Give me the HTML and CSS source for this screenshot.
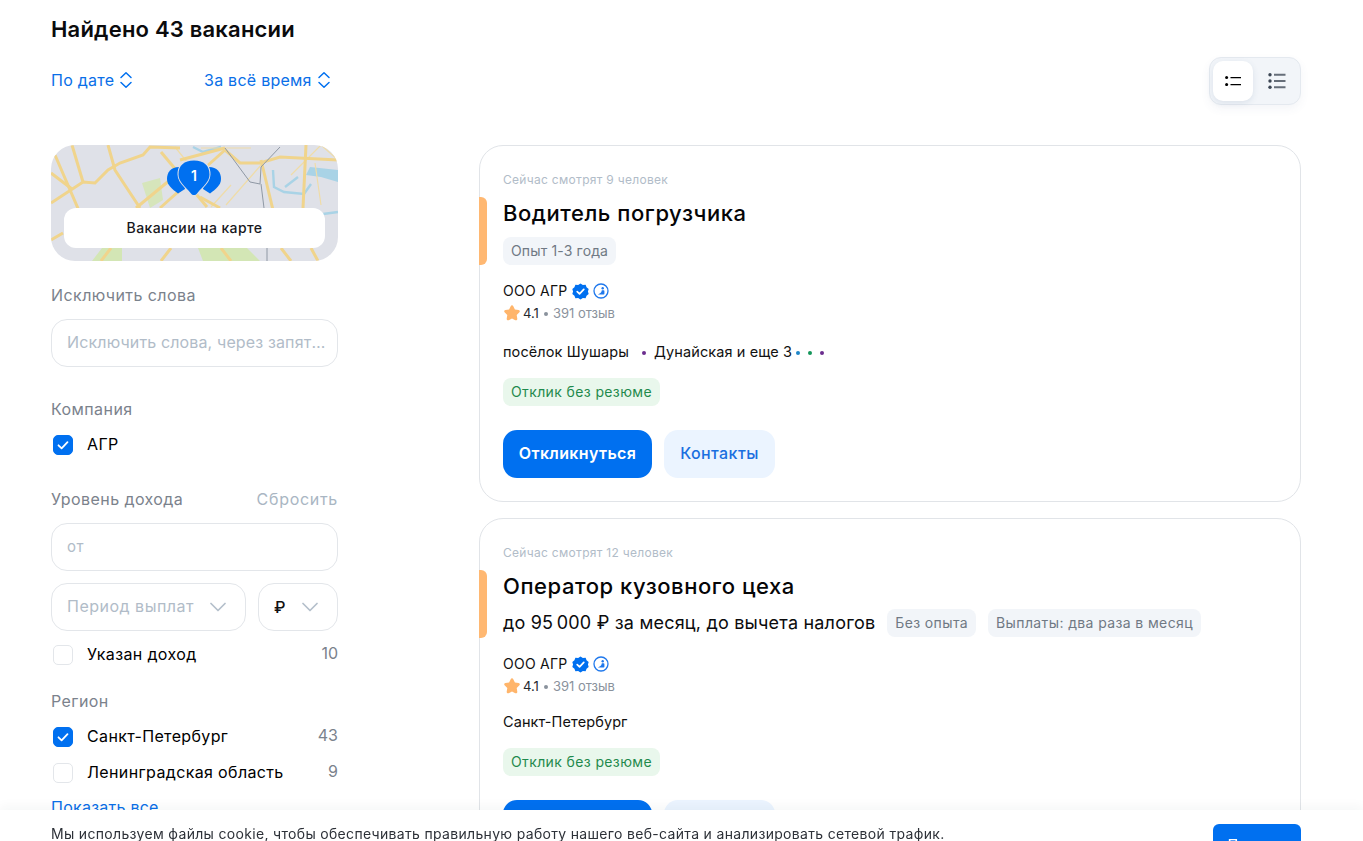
FILE: index.html
```html
<!DOCTYPE html>
<html lang="ru">
<head>
<meta charset="utf-8">
<title>Найдено 43 вакансии</title>
<link rel="stylesheet" href="styles.css">
</head>
<body>
<svg class="defs" width="0" height="0" aria-hidden="true">
  <defs>
    <symbol id="updown" viewBox="0 0 14 18"><path d="M2 6.5 7 1.8l5 4.7M2 11.5l5 4.7 5-4.7" fill="none" stroke="#0070f0" stroke-width="1.5" stroke-linecap="round" stroke-linejoin="round"/></symbol>
    <symbol id="chev" viewBox="0 0 16 10"><path d="M1 1.5 8 8.5l7-7" fill="none" stroke="#b4bfcb" stroke-width="1.7" stroke-linecap="round" stroke-linejoin="round"/></symbol>
    <symbol id="tick" viewBox="0 0 20 20"><path d="m5.5 10.3 3.1 3 5.9-6.2" fill="none" stroke="#fff" stroke-width="1.8" stroke-linecap="round" stroke-linejoin="round"/></symbol>
    <symbol id="verified" viewBox="0 0 16 16"><path d="M8 .4l2.2 1.4 2.6-.1.9 2.4 2 1.6-.7 2.3.7 2.3-2 1.6-.9 2.4-2.6-.1L8 15.6l-2.2-1.4-2.6.1-.9-2.4-2-1.6.7-2.3-.7-2.3 2-1.6.9-2.4 2.6.1z" fill="#0070f0"/><path d="m4.9 8.1 2.2 2.1 4-4.2" fill="none" stroke="#fff" stroke-width="1.6" stroke-linecap="round" stroke-linejoin="round"/></symbol>
    <symbol id="clockbadge" viewBox="0 0 16 16"><circle cx="8" cy="8" r="7" fill="none" stroke="#1f78ec" stroke-width="1.3"/><path d="M3.8 11.5c1.5-.2 2.6-.7 3.6-1.6.8-.7 1.1-.9 1.4-2.6h1.8c.5 0 .8.3.8.8v2.6c0 .5-.3.8-.8.8z" fill="#1f78ec"/><circle cx="9.7" cy="5.2" r="1.2" fill="#1f78ec"/></symbol>
    <symbol id="star" viewBox="0 0 18 18"><path d="M9 1.2c.6 0 1 .4 1.3 1l1.6 3.3 3.7.5c1.2.2 1.6 1.5.8 2.3L13.7 11l.6 3.7c.2 1.2-1 2-2 1.5L9 14.4l-3.3 1.8c-1 .5-2.2-.3-2-1.5l.6-3.7-2.7-2.7c-.8-.8-.4-2.1.8-2.3l3.7-.5 1.6-3.3c.3-.6.7-1 1.3-1z" fill="#ffb56b"/></symbol>
  </defs>
</svg>

<main class="page">
  <h1 class="page-title">Найдено 43 вакансии</h1>

  <div class="toolbar">
    <div class="sorts">
      <a class="sort sort-date">По дате <svg class="updown"><use href="#updown"/></svg></a>
      <a class="sort">За всё время <svg class="updown"><use href="#updown"/></svg></a>
    </div>
    <div class="view-switch">
      <span class="view-btn view-btn-active">
        <svg width="16" height="10" viewBox="0 0 16 10"><circle cx="1.6" cy="1.6" r="1.5" fill="#000"/><circle cx="1.6" cy="8.6" r="1.5" fill="#000"/><path d="M5.5 1.6H16M5.5 8.6H16" stroke="#000" stroke-width="1.3"/></svg>
      </span>
      <span class="view-btn">
        <svg width="18" height="16" viewBox="0 0 18 16"><circle cx="2" cy="1.8" r="1.7" fill="#3c4654"/><circle cx="2" cy="8" r="1.7" fill="#3c4654"/><circle cx="2" cy="14.2" r="1.7" fill="#3c4654"/><path d="M6 1.8h11.5M6 8h11.5M6 14.2h11.5" stroke="#666e79" stroke-width="2"/></svg>
      </span>
    </div>
  </div>

  <div class="columns">
    <aside class="filters">
      <div class="map-card">
        <svg class="map-art" viewBox="0 0 287 116" preserveAspectRatio="none" aria-hidden="true">
          <rect width="287" height="116" fill="#dfe1e8"/>
          <path d="M91 38 109 33 112 55 99 63z" fill="#d6e5bb"/>
          <path d="M41 116 51 103H71V116zM147 103H196L209 116H152z" fill="#d3e6b5"/>
          <path d="M222 25l1 17 10 5 20 2 7-10M234 42 247 32M142 2l10 5 18-5M272 69l15-2" fill="none" stroke="#a9d3e6" stroke-width="2.4"/>
          <path d="M259 22 287 25V37L270 32 255 30z" fill="#a9d3e6"/>
          <g fill="none" stroke="#efdca8" stroke-width="1.2">
            <path d="M175 60 210 20M240 30 270 0 287 15M150 3H200M124 2 149 33M160 62 180 40M0 6 10 0M264 18 270 60"/>
          </g>
          <g fill="none" stroke="#f0d48c" stroke-width="3">
            <path d="M4 10 29 68 36 80"/>
            <path d="M21 0 32 37"/>
            <path d="M0 58 32 37 44 38 57 25 69 18 92 10 99 2 129 3"/>
            <path d="M57 0 64 25 89 63"/>
            <path d="M129 15 174 3"/>
            <path d="M109 63 174 5"/>
            <path d="M85 63 125 30"/>
            <path d="M110 7 156 62"/>
            <path d="M149 52 169 63"/>
            <path d="M174 5 189 18 209 18 229 12 287 15"/>
            <path d="M210 15 222 65"/>
            <path d="M255 0 252 63"/>
            <path d="M0 95 12 88M260 103 267 116M60 103 50 116M120 103 110 116M170 103 180 116M230 103 240 116M0 28 21 44"/>
          </g>
          <path d="M174 3 199 37 209 39 210 22 229 2M210 39 213 63M216 103V116" fill="none" stroke="#8f98a4" stroke-width="1"/>
        </svg>
        <div class="map-pins" aria-hidden="true">
          <svg width="56" height="38" viewBox="0 0 56 38">
            <path d="M13 7C5 7 1 12 1 19 1 25 6 29 12 33.5L19 29 15 7z" fill="#0070f0"/>
            <path d="M43 7C51 7 55 12 55 19 55 25 50 29 44 33.5L37 29 41 7z" fill="#0070f0"/>
            <path d="M28 .5C38 .5 43.5 5.5 43.5 14.5 43.5 22 37 26 31 33.5 29.5 35.5 26.5 35.5 25 33.5 19 26 12.5 22 12.5 14.5 12.5 5.5 18 .5 28 .5z" fill="#0070f0" stroke="#dfe1e8" stroke-width="2" paint-order="stroke"/>
          </svg>
          <span class="map-pin-num">1</span>
        </div>
        <button class="map-btn">Вакансии на карте</button>
      </div>

      <section class="filter-group">
        <h3 class="filter-label">Исключить слова</h3>
        <div class="field field-words"><span class="placeholder ellipsis">Исключить слова, через запятую</span></div>
      </section>

      <section class="filter-group group-company">
        <h3 class="filter-label">Компания</h3>
        <label class="check-row check-company"><span class="box box-on"><svg width="20" height="20"><use href="#tick"/></svg></span><span class="check-text">АГР</span></label>
      </section>

      <section class="filter-group group-income">
        <div class="label-row">
          <h3 class="filter-label">Уровень дохода</h3>
          <span class="reset">Сбросить</span>
        </div>
        <div class="field field-from"><span class="placeholder placeholder-sm">от</span></div>
        <div class="select-row">
          <div class="field select-period"><span class="placeholder">Период выплат</span><svg class="chev" width="16" height="10"><use href="#chev"/></svg></div>
          <div class="field select-cur"><span class="cur">₽</span><svg class="chev" width="16" height="10"><use href="#chev"/></svg></div>
        </div>
        <label class="check-row check-income"><span class="box"></span><span class="check-text">Указан доход</span><span class="count">10</span></label>
      </section>

      <section class="filter-group group-region">
        <h3 class="filter-label">Регион</h3>
        <label class="check-row check-spb"><span class="box box-on"><svg width="20" height="20"><use href="#tick"/></svg></span><span class="check-text">Санкт-Петербург</span><span class="count">43</span></label>
        <label class="check-row check-lo"><span class="box"></span><span class="check-text">Ленинградская область</span><span class="count">9</span></label>
        <a class="show-all">Показать все</a>
      </section>
    </aside>

    <section class="results">
      <article class="job">
        <span class="job-accent"></span>
        <p class="watching">Сейчас смотрят 9 человек</p>
        <h2 class="job-title">Водитель погрузчика</h2>
        <div class="job-meta"><span class="tag tag-exp">Опыт 1-3 года</span></div>
        <div class="company"><span>ООО АГР</span><svg width="17" height="17"><use href="#verified"/></svg><svg width="16" height="16"><use href="#clockbadge"/></svg></div>
        <div class="rating"><svg width="18" height="18"><use href="#star"/></svg><b>4.1</b><i class="sep"></i><span>391 отзыв</span></div>
        <div class="location">
          <span>посёлок Шушары</span>
          <i class="dot dot-first dot-purple"></i>
          <span>Дунайская и еще 3</span>
          <i class="dot dot-blue"></i><i class="dot dot-green"></i><i class="dot dot-purple"></i>
        </div>
        <span class="tag tag-green">Отклик без резюме</span>
        <div class="actions"><button class="btn btn-primary">Откликнуться</button><button class="btn btn-soft">Контакты</button></div>
      </article>

      <article class="job">
        <span class="job-accent"></span>
        <p class="watching">Сейчас смотрят 12 человек</p>
        <h2 class="job-title">Оператор кузовного цеха</h2>
        <div class="job-meta job-meta-salary"><span class="salary">до 95&thinsp;000 ₽ за месяц, до вычета налогов</span><span class="tag">Без опыта</span><span class="tag">Выплаты: два раза в месяц</span></div>
        <div class="company"><span>ООО АГР</span><svg width="17" height="17"><use href="#verified"/></svg><svg width="16" height="16"><use href="#clockbadge"/></svg></div>
        <div class="rating"><svg width="18" height="18"><use href="#star"/></svg><b>4.1</b><i class="sep"></i><span>391 отзыв</span></div>
        <div class="location location-plain"><span>Санкт-Петербург</span></div>
        <span class="tag tag-green">Отклик без резюме</span>
        <div class="actions"><button class="btn btn-primary">Откликнуться</button><button class="btn btn-soft">Контакты</button></div>
      </article>
    </section>
  </div>
</main>

<div class="cookie">
  <p class="cookie-text">Мы используем файлы cookie, чтобы обеспечивать правильную работу нашего веб-сайта и анализировать сетевой трафик.</p>
  <button class="cookie-btn">Принять</button>
</div>
</body>
</html>
```
FILE: styles.css
```css
* { box-sizing: border-box; }
html, body { margin: 0; height: 841px; overflow: hidden; background: #fff; }
body { font-family: Inter, "Noto Sans", "Liberation Sans", sans-serif; color: #000; font-size: 16px; }
h1, h2, h3, p { margin: 0; font-weight: 400; }
button { font-family: inherit; border: 0; cursor: pointer; }
.defs { position: absolute; }

.page { width: 1250px; margin-left: 51px; }
.page-title { font-size: 22px; line-height: 28px; font-weight: 600; padding-top: 15px; letter-spacing: 0.2px; color: #0b0b0d; }

.toolbar { display: flex; justify-content: space-between; align-items: flex-start; margin-top: 14px; height: 88px; }
.sorts { display: flex; padding-top: 13px; }
.sort { display: inline-flex; align-items: center; gap: 5px; font-size: 16px; line-height: 20px; color: #0a6fe8; letter-spacing: 0.25px; }
.sort-date { width: 153px; }
.updown { width: 14px; height: 18px; }

.view-switch { display: flex; width: 92px; height: 48px; padding: 3px; background: #f2f5f9; border: 1px solid #e4e9ef; border-radius: 12px; box-shadow: 0 4px 10px rgba(60, 90, 130, 0.06); }
.view-btn { width: 40px; height: 40px; flex: none; display: flex; align-items: center; justify-content: center; border-radius: 10px; }
.view-btn + .view-btn { margin-left: 4px; }
.view-btn-active { background: #fff; box-shadow: 0 2px 6px rgba(60, 90, 130, 0.12); }

.columns { display: flex; align-items: flex-start; }
.filters { width: 287px; flex: none; margin-right: 141px; }

.map-card { position: relative; height: 116px; border-radius: 24px; overflow: hidden; }
.map-art { display: block; width: 100%; height: 100%; }
.map-pins { position: absolute; left: 115px; top: 15px; width: 56px; height: 38px; }
.map-pin-num { position: absolute; left: 0; right: 0; top: 7px; text-align: center; color: #fff; font-size: 14px; line-height: 18px; font-weight: 600; }
.map-btn { position: absolute; left: 13px; right: 13px; bottom: 13px; height: 40px; padding: 0 0 2px; background: #fff; border-radius: 12px; font-size: 14px; font-weight: 500; color: #17171c; letter-spacing: 0.4px; }

.filter-label { font-size: 16px; line-height: 20px; color: #7b828c; letter-spacing: 0.42px; }
.filter-group { margin-top: 24px; }
.group-company { margin-top: 32px; }
.group-income { margin-top: 32px; }
.group-region { margin-top: 24px; }

.field { display: flex; align-items: center; height: 48px; border: 1px solid #e3e6ea; border-radius: 16px; padding-left: 15px; background: #fff; }
.field-words { margin-top: 14px; }
.placeholder { font-size: 16px; margin-top: -2px; color: #b1bcc8; white-space: nowrap; letter-spacing: 0.5px; }
.placeholder-sm { font-size: 15px; }
.ellipsis { min-width: 0; overflow: hidden; text-overflow: ellipsis; margin-right: 7px; letter-spacing: 0.14px; }

.label-row { display: flex; justify-content: space-between; }
.reset { font-size: 16px; line-height: 20px; color: #a9b6c3; letter-spacing: 0.7px; }
.field-from { margin-top: 14px; }
.select-row { display: flex; gap: 12px; margin-top: 12px; }
.select-period { width: 195px; flex: none; justify-content: space-between; padding-right: 19px; }
.select-cur { flex: 1; justify-content: space-between; padding-right: 19px; }
.cur { font-size: 16px; font-weight: 500; color: #111; }

.check-row { display: flex; align-items: center; height: 24px; }
.check-company { margin-top: 14px; }
.check-income { margin-top: 12px; }
.check-spb { margin-top: 14px; }
.check-lo { margin-top: 12px; }
.box { width: 20px; height: 20px; flex: none; margin-left: 2px; border: 1px solid #e3e6ea; border-radius: 5px; background: #fff; }
.box-on { background: #0070f0; border-color: #0070f0; display: flex; align-items: center; justify-content: center; }
.box-on svg { flex: none; }
.check-text { margin-left: 14px; margin-top: -2px; font-size: 16px; line-height: 20px; color: #000; letter-spacing: 0.36px; }
.count { margin-left: auto; font-size: 16px; color: #7b828c; margin-top: -4px; }
.show-all { display: block; margin-top: 12px; font-size: 16px; line-height: 20px; color: #0a6fe8; letter-spacing: 0.25px; }

.results { flex: 1; display: flex; flex-direction: column; gap: 16px; min-width: 0; }
.job { position: relative; height: 357px; display: flex; flex-direction: column; align-items: flex-start; padding: 26px 23px 0; border: 1px solid #e1e4e8; border-radius: 24px; background: #fff; }
.job-accent { position: absolute; left: -1px; top: 51px; width: 8px; height: 68px; background: #ffb872; border-radius: 0 6px 6px 0; }
.watching { font-size: 12px; line-height: 16px; color: #b1bcc8; letter-spacing: 0.3px; }
.job-title { font-size: 22px; line-height: 28px; font-weight: 500; margin-top: 11px; color: #050507; letter-spacing: 0.55px; }
.job-meta { display: flex; align-items: center; gap: 12px; margin-top: 10px; }
.job-meta-salary { margin-top: 9px; margin-bottom: 1px; }
.salary { font-size: 18px; line-height: 28px; color: #0b0b0d; letter-spacing: 0.2px; white-space: nowrap; }
.tag { display: inline-flex; align-items: center; height: 28px; padding: 0 8px 2px; background: #f2f5f9; border-radius: 8px; font-size: 14px; color: #707984; letter-spacing: 0.38px; white-space: nowrap; }
.tag-exp { letter-spacing: 0.15px; }
.tag-green { background: #e9f7ec; color: #1f8a4d; }

.company { display: flex; align-items: center; gap: 4px; margin-top: 16px; font-size: 14px; line-height: 20px; color: #111; letter-spacing: 0.25px; }
.rating { display: flex; align-items: center; margin-top: 3px; height: 18px; font-size: 13px; color: #8a929c; }
.rating b { font-weight: 400; color: #24282e; margin-left: 2px; }
.rating .sep { width: 4px; height: 4px; border-radius: 50%; background: #8a929c; margin: 1px 5px 0; }
.location { display: flex; align-items: center; margin-top: 20px; font-size: 14.5px; line-height: 20px; color: #111; letter-spacing: 0.1px; height: 20px; }
.location-plain { margin-top: 17px; }
.dot { width: 4px; height: 4px; border-radius: 50%; margin-left: 8px; margin-top: 2px; }
.dot-first { margin-left: 13px; margin-right: 8px; }
.dot-blue { background: #1d86c8; margin-left: 4px; }
.dot-green { background: #13965a; }
.dot-purple { background: #6b2d8e; }
.job > .tag-green { margin-top: 16px; flex: none; }

.actions { display: flex; gap: 12px; margin-top: 24px; }
.btn { height: 48px; padding: 0 0 3px; border-radius: 14px; font-size: 16px; }
.btn-primary { width: 149px; background: #0070f0; color: #fff; font-weight: 600; letter-spacing: 0.35px; }
.btn-soft { width: 111px; background: #ebf4ff; color: #1a6fe0; font-weight: 500; letter-spacing: 0.4px; }

.cookie { position: fixed; left: 0; right: 0; top: 810px; height: 60px; background: #fff; padding: 14px 62px 0 51px; display: flex; justify-content: space-between; align-items: flex-start; box-shadow: 0 -4px 10px rgba(30, 40, 60, 0.04); }
.cookie-text { font-size: 14px; line-height: 20px; color: #2d3138; letter-spacing: 0.32px; }
.cookie-btn { width: 88px; height: 40px; background: #0070f0; color: #fff; border-radius: 6px; font-size: 14px; font-weight: 500; }
```
